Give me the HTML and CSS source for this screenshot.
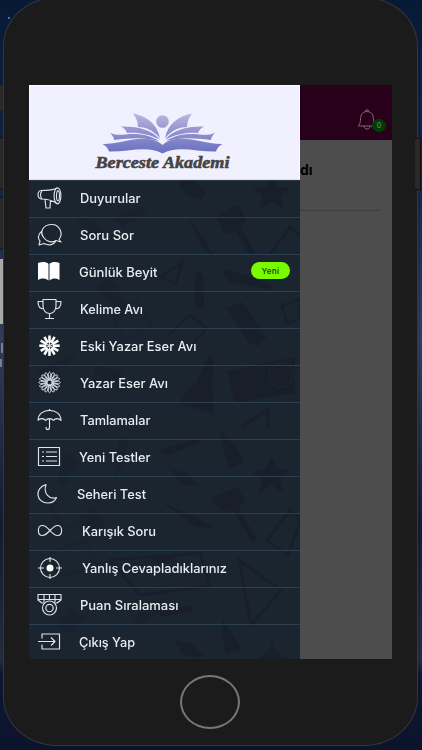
FILE: index.html
```html
<!DOCTYPE html>
<html lang="tr">
<head>
<meta charset="utf-8">
<title>Berceste Akademi</title>
<link rel="stylesheet" href="styles.css">
</head>
<body>
<svg class="backdrop" viewBox="0 0 422 750" aria-hidden="true">
  <defs><linearGradient id="sky" x1="0" y1="0" x2="0" y2="1"><stop offset="0" stop-color="#061a35"/><stop offset=".25" stop-color="#142443"/><stop offset=".45" stop-color="#303c5a"/><stop offset=".7" stop-color="#111b32"/><stop offset=".88" stop-color="#252b3b"/><stop offset=".9" stop-color="#0c1734"/><stop offset="1" stop-color="#0c142b"/></linearGradient></defs>
  <path fill="url(#sky)" d="M0 0h422v750H0z"/>
  <circle cx="9" cy="18" r=".9" fill="#8195ad"/>
  <path fill="#292929" stroke="#101216" d="M-1 84h6v28h-6zM-1 138h6v51h-6zM-1 197h6v52h-6z"/>
  <path fill="#a9a9a9" d="M0 259h4v65H0z"/>
  <path fill="#777e8c" d="M1 343h2v10H1zM0 359h2v8H0z"/>
</svg>
<main class="phone">
  <div class="screen">
    <aside class="drawer">
      <header class="brand">
        <svg width="271" height="95" viewBox="0 0 271 95">
          <defs><linearGradient id="book" gradientUnits="userSpaceOnUse" x1="0" y1="28" x2="0" y2="68"><stop stop-color="#bbb8dd"/><stop offset=".5" stop-color="#918fce"/><stop offset="1" stop-color="#6871c0"/></linearGradient></defs>
          <g fill="url(#book)">
            <circle cx="133.500" cy="36.500" r="6.300"/>
            <path id="wing" d="M104 28.500C118 31 128 39 131 53C124 45 116 42 109 42C109 37 107 32 104 28.500zM92 41.500C109 41 123 45 131 54.500C119 49 109 47 98 48C97 45 95 43 92 41.500zM81 48C86 50 91 50 96 49.500C110 48 121 50 130 56C115 52 101 53 85 55C85 52 83 50 81 48z"/>
            <use href="#wing" transform="translate(267 0) scale(-1 1)"/>
            <path d="M73.500 59C89 60 119 46 133.500 60C148 46 178 60 193.500 59C190 61 188 63 187 66.500C168 67 148 60 133.500 68.500C119 60 99 67 80 66.500C79 63 77 61 73.500 59z"/>
          </g>
          <text class="wordmark" x="66.500" y="82.500" textLength="134" lengthAdjust="spacingAndGlyphs">Berceste Akademi</text>
        </svg>
      </header>
      <nav class="menu">
        <svg class="doodles" viewBox="29 180 271 479" aria-hidden="true">
          <g class="solid">
            <path d="M178 183l13-5 15 15-5 6-14-3zM272 175l5 12 13 1-10 8 4 14-12-8-13 8 4-14-11-8 14-1z"/>
            <path d="M215 217l23-12 9 15-7 6 15 26-5 3-15-24-10 3zM188 217l18 24 8 17-11-10zM222 272l8-2 43 15-1 5-42-8zM195 275l4-4 4 5 1 28-4 5-5-5zM227 308l15-6 24 35-7 9-10-3z"/>
            <path d="M227 371l68-14v36l-60 10zM208 356l5 2-1 31 2 25-34-10 7-15 9-5zM160 450l39-12 3 4-36 14zM220 430l18 20 6 12-14 6-6-14zM272 456l5 12 13 3-10 8 3 14-11-8-13 8 3-14-10-7 13-3zM170 469l17 4 11 13-17-2z"/>
            <path d="M210 498l28-11 7 15-7 6 19 31-5 3-18-30-14-2zM160 501l36 16 19 11-19-1-15-11zM222 619l12 17 8 14-16 4-4-18zM174 640l18 4 12 13-20-1zM272 641l5 12 12 6h-31l9-6zM150 558l30-2-17 7zM160 610l32-4v6l-32 5z"/>
            <path class="dim" d="M76 216l18 4 10 12-13 8zM112 218l28-12 8 7-26 14zM96 285l13-9 23 35-13 7zM36 373l35-20 4 5-31 21zM96 365l27 6-4 17-27-7zM65 452l14 9-14 25-8-5zM120 437l8 2-5 28-9 12zM132 616l26-12 5 6-26 16zM69 607l18 11-17 16-12-7zM79 516l17-9 9 19-19 7z"/>
          </g>
          <g class="line"><path d="M270 254l20-27 11 10M160 277l22-15-6 22zM166 337l24-22 17 13-18 20M282 306l18-7v20l-13 4zM242 427l26-18v20M267 540l23-30 11 9-13 36zM110 560l90-7 10 33-70 9zM239 560l42 30-30 35z"/><path class="dim" d="M111 313l26-13 15 26-27 14zM50 504l12 25 41-11M50 553l36-13 12 27-39 9z"/></g>
          <circle class="lens" cx="281" cy="375" r="12"/>
        </svg>
        <ul>
          <li><svg viewBox="0 0 28 28"><path d="M20 2C15 5 9 4 4 4.500C0 5 0 12 4 13C9 13 15 14 20 17.500M8 13.500L9 22H13L13.500 14M5 5C3 7 3 11 5 13"/><ellipse cx="20.500" cy="9.800" rx="3.400" ry="8"/><ellipse cx="21" cy="9.800" rx="1.500" ry="5"/></svg><span style="--w:60.5px">Duyurular</span></li>
          <li><svg viewBox="0 0 28 28"><path d="M22 16.500C27 10 22 1.500 15 1.500C6 1.500 2 9 7 15C11 20 16 19.500 19 17.500L24 19zM5 8C0 12 1 16 3 18L2 22L7 20.500C12 23 17 22 19 17.500"/></svg><span style="--w:54px">Soru Sor</span></li>
          <li class="near"><svg viewBox="0 0 28 28"><path class="fill" d="M1 3C5 1.500 9 1.500 11.500 3.800V20.500C8 18 5 18 1 20zM12.500 3.800C15 1.500 19 1.500 22.500 3V20C19 18 16 18 12.500 20.500z"/></svg><span style="--w:78.5px">Günlük Beyit</span><b class="badge">Yeni</b></li>
          <li><svg viewBox="0 0 28 28"><path d="M6 2.500H19V9C19 19 6 19 6 9zM6 4.500H1C1 9 3 12 7 12M19 4.500H24C24 9 22 12 18 12M12.500 17V21.500M8 21.500H17"/></svg><span style="--w:63px">Kelime Avı</span></li>
          <li><svg viewBox="0 0 28 28"><g class="thick"><path id="ray" d="M12.500 8.500V1.500"/><use href="#ray" transform="rotate(30 12.500 11.700)"/><use href="#ray" transform="rotate(60 12.500 11.700)"/><use href="#ray" transform="rotate(90 12.500 11.700)"/><use href="#ray" transform="rotate(120 12.500 11.700)"/><use href="#ray" transform="rotate(150 12.500 11.700)"/><use href="#ray" transform="rotate(180 12.500 11.700)"/><use href="#ray" transform="rotate(210 12.500 11.700)"/><use href="#ray" transform="rotate(240 12.500 11.700)"/><use href="#ray" transform="rotate(270 12.500 11.700)"/><use href="#ray" transform="rotate(300 12.500 11.700)"/><use href="#ray" transform="rotate(330 12.500 11.700)"/></g><path d="M12.500 8V15.500M9 9.700L16 13.700M9 13.700L16 9.700"/></svg><span style="--w:116.5px">Eski Yazar Eser Avı</span></li>
          <li><svg viewBox="0 0 28 28"><g class="petals" transform="translate(-1.200 -1.300) scale(1.100 1.060)"><path id="pt" d="M12.500 10L11.200 4Q12.500 .5 13.800 4z"/><use href="#pt" transform="rotate(22.500 12.500 12)"/><use href="#pt" transform="rotate(45 12.500 12)"/><use href="#pt" transform="rotate(67.500 12.500 12)"/><use href="#pt" transform="rotate(90 12.500 12)"/><use href="#pt" transform="rotate(112.500 12.500 12)"/><use href="#pt" transform="rotate(135 12.500 12)"/><use href="#pt" transform="rotate(157.500 12.500 12)"/><use href="#pt" transform="rotate(180 12.500 12)"/><use href="#pt" transform="rotate(202.500 12.500 12)"/><use href="#pt" transform="rotate(225 12.500 12)"/><use href="#pt" transform="rotate(247.500 12.500 12)"/><use href="#pt" transform="rotate(270 12.500 12)"/><use href="#pt" transform="rotate(292.500 12.500 12)"/><use href="#pt" transform="rotate(315 12.500 12)"/><use href="#pt" transform="rotate(337.500 12.500 12)"/></g></svg><span style="--w:88px">Yazar Eser Avı</span></li>
          <li><svg viewBox="0 0 28 28"><path d="M1 12.500C1 -1 24 -1 24 12.500C22 10 18 10 16.500 12.500C15 10 10 10 8.500 12.500C7 10 3 10 1 12.500M12.500 1V3M12.500 11V19C12.500 22.500 9 22.500 9 19"/></svg><span style="--w:70.5px">Tamlamalar</span></li>
          <li class="near"><svg viewBox="0 0 28 28"><path d="M1.500 2.500H22.500V20.500H1.500zM5 7h2M9 7h11M5 11.500h2M9 11.500h11M5 16h2M9 16h11"/></svg><span style="--w:71.5px">Yeni Testler</span></li>
          <li class="nearest"><svg viewBox="0 0 28 28"><path d="M9 2.500C-3 6 -1 21 11 21C16 21 18 19 19.500 15.500C12 18 6 11 9 2.500z"/></svg><span style="--w:69px">Seheri Test</span></li>
          <li class="far"><svg viewBox="0 0 28 28"><path d="M13 11.500C9 7 7.500 6.500 5.500 6.500C0 6.500 0 16.500 5.500 16.500C11 16.500 15 6.500 20.500 6.500C26 6.500 26 16.500 20.500 16.500C18 16.500 16 15 13 11.500z"/></svg><span style="--w:74px">Karışık Soru</span></li>
          <li class="far"><svg viewBox="0 0 28 28"><circle cx="13" cy="12" r="9.500"/><circle class="fill" cx="13" cy="12" r="3.500"/><path d="M13 1V6M13 18V23M1 12H7M19 12H25"/></svg><span style="--w:145px">Yanlış Cevapladıklarınız</span></li>
          <li><svg viewBox="0 0 28 28"><path d="M1 1.500H24V7L20 10H5L1 7zM1 6.500H24M7 2V9M12.500 2V6M18 2V9"/><circle class="mask" cx="12.500" cy="15" r="7"/><circle cx="12.500" cy="15" r="3.700"/></svg><span style="--w:98.5px">Puan Sıralaması</span></li>
          <li class="near"><svg viewBox="0 0 28 28"><path d="M5 8.500V4H22.500V19H5V14.500M1 11.500H18M14 7.500L18 11.500L14 15.500"/></svg><span style="--w:56px">Çıkış Yap</span></li>
        </ul>
      </nav>
    </aside>
    <section class="page">
      <div class="topbar">
        <svg class="bell" width="20" height="22" viewBox="0 0 20 22"><path d="M1 17C4 15 3 11 4 7C5 1 15 1 16 7C17 11 16 15 19 17zM8 2Q10 -1 12 2M7 17C7 21 13 21 13 17"/></svg>
        <b class="count">0</b>
      </div>
      <h1>dı</h1>
    </section>
  </div>
  <div class="home"></div>
  <i class="side-key"></i>
</main>
<script src="fit.js"></script>
</body>
</html>
```

FILE: styles.css
```css
* { box-sizing: border-box; }
body { margin: 0; width: 422px; height: 750px; overflow: hidden; background: #0c1734; font-family: Inter, "Liberation Sans", sans-serif; }
.backdrop { position: absolute; inset: 0; width: 422px; height: 750px; }
.phone { position: relative; width: 415px; height: 749px; margin: -3px 0 0 3px; padding: 87px 24px 0 25px; border: 1px solid #33363b; border-radius: 54px / 49px; background: #1b1b1b; }
.side-key { position: absolute; right: -4px; top: 140px; width: 6px; height: 52px; background: #292929; border: 1px solid #101216; border-left: 0; }
.screen { display: flex; width: 363px; height: 574px; background: #4d4d4d; overflow: hidden; }
.drawer { width: 271px; flex: none; }
.brand { height: 95px; background: #f1f0fe; border: 1px solid #fbfaff; border-bottom-color: #dcdce8; }
.brand svg { display: block; margin: -1px; }
.wordmark { font: italic bold 17.500px "Liberation Serif", serif; fill: #444446; stroke: #444446; stroke-width: .6px; }
.menu { position: relative; height: 479px; background: #1b2530; }
.doodles { position: absolute; inset: 0; width: 271px; height: 479px; filter: blur(.6px); }
.solid { fill: #181d29; opacity: .7; }
.line { fill: none; stroke: #181d29; stroke-width: 3px; opacity: .6; }
.lens { fill: none; stroke: #1b2530; stroke-width: 2px; }
.dim { opacity: .5; }
ul { position: relative; margin: 0; padding: 0; list-style: none; }
li { display: flex; align-items: center; height: 37px; padding: 0 10px 0 8px; border-bottom: 1px solid #2d4052; color: #e9edf0; }
li:first-child { height: 38px; border-top: 1px solid #293743; }
li svg { width: 28px; height: 28px; margin-right: 15px; margin-top: 2px; flex: none; fill: none; stroke: #dfe4e8; stroke-width: 1.150px; stroke-linejoin: round; }
li .fill { fill: #fff; stroke: none; }
li .mask { fill: #1b2530; }
li .thick { stroke: #fff; stroke-width: 2.600px; }
li .petals { stroke-width: .8px; }
li span { font-size: 12.800px; font-weight: 450; line-height: 20px; white-space: nowrap; margin-top: 0; transform-origin: 0 50%; }
.near svg { margin-right: 14px; }
.nearest svg { margin-right: 12px; }
.far svg { margin-right: 17px; }
.badge { display: flex; align-items: center; justify-content: center; width: 39px; height: 17px; margin: -5px 0 0 auto; border-radius: 9px; background: #79fc00; color: #254b0d; font-size: 8px; font-weight: 600; letter-spacing: .4px; }
.page { flex: 1; }
.topbar { display: flex; height: 55px; padding: 24px 0 0 57px; background: #290019; }
.bell { fill: none; stroke: #806675; stroke-width: 1px; flex: none; }
.count { width: 14px; height: 13px; margin: 10px 0 0 -5px; border-radius: 50%; background: #003e06; color: #739577; text-align: center; font-size: 7px; line-height: 13px; font-weight: 400; }
h1 { width: 81px; height: 71px; margin: 0; padding: 21px 0 0; border-bottom: 1px solid #3f3f3f; color: #000; font: bold 14px/18px Inter, sans-serif; }
.home { width: 60px; height: 54px; margin: 16px auto 0 151px; border: 2.500px solid #777; border-radius: 50%; }
```

FILE: fit.js
```js
document.querySelectorAll("li span").forEach((label) => {
  const target = parseFloat(label.style.getPropertyValue("--w"));
  label.style.transform = `scaleX(${target / label.getBoundingClientRect().width})`;
});
```
